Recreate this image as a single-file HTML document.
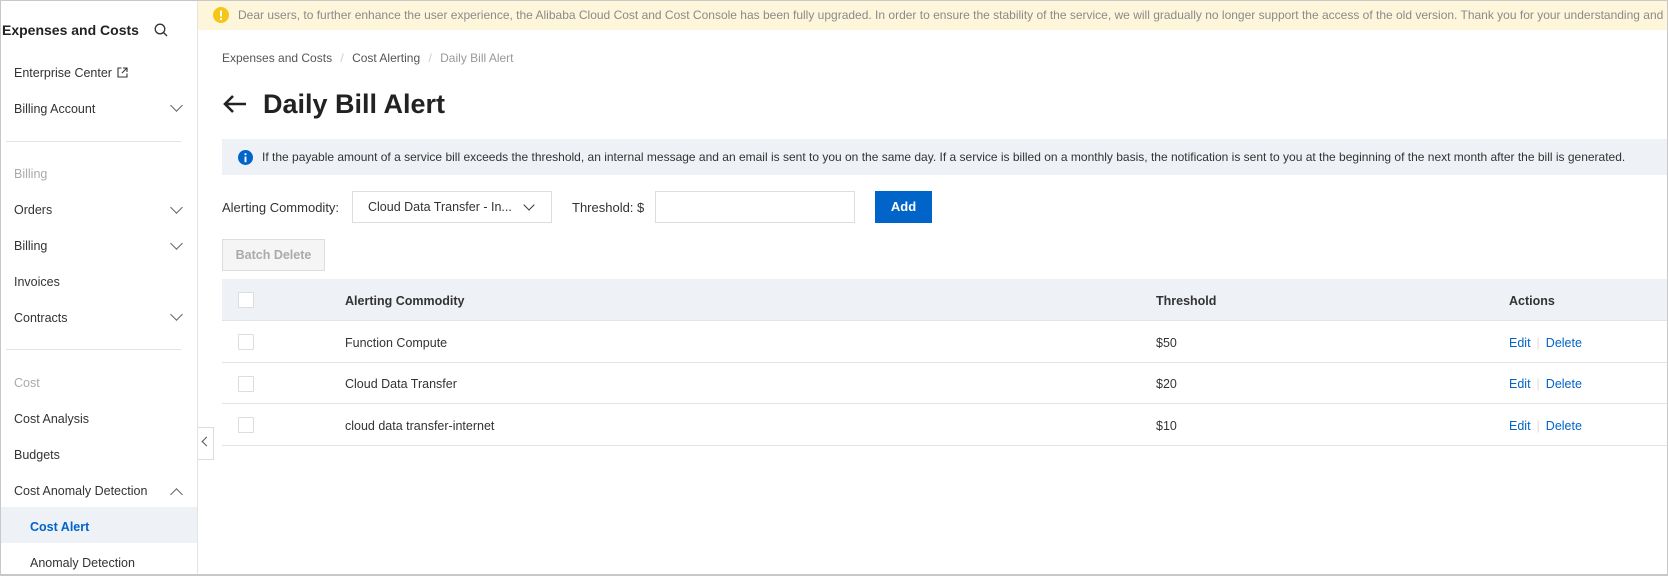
<!DOCTYPE html>
<html><head><meta charset="utf-8"><style>
*{box-sizing:border-box;margin:0;padding:0}
body{width:1668px;height:576px;overflow:hidden;background:#fff;font-family:"Liberation Sans",sans-serif;font-size:13px;color:#333;position:relative}
.frame{position:absolute;inset:0;border:1px solid #c8c8c8;border-bottom:2px solid #c8c8c8;pointer-events:none;z-index:9}
.side{position:absolute;left:0;top:0;width:198px;height:576px;border-right:1px solid #e3e3e3;background:#fff}
.a{position:absolute;white-space:nowrap}
.side .it{position:absolute;left:14px;font-size:13px;color:#333}
.chev{position:absolute;left:172px;width:9px;height:9px;border-right:1.3px solid #666;border-bottom:1.3px solid #666;transform:rotate(45deg)}
.sep{position:absolute;left:6px;width:175px;height:1px;background:#e3e3e3}
.banner{position:absolute;left:198px;top:0;right:0;height:30px;background:#fef6da;color:#8a8a8a;font-size:12px;line-height:30px;padding-left:40px;white-space:nowrap;overflow:hidden}
.cb{position:absolute;left:238px;width:16px;height:16px;border:1px solid #ddd;background:#fff;border-radius:1px}
.hl{position:absolute;left:222px;right:0;height:1px;background:#e3e3e3}
.lnk{color:#0064c8}
.t{font-size:12.5px}
</style></head><body>
<div class="side">
 <div class="a" style="left:2px;top:22px;font-size:14px;font-weight:bold;color:#222">Expenses and Costs</div>
 <svg class="a" style="left:154px;top:23px" width="14" height="14" viewBox="0 0 14 14"><circle cx="6" cy="6" r="4.8" fill="none" stroke="#333" stroke-width="1.3"/><path d="M9.5 9.5L13 13" stroke="#333" stroke-width="1.3"/></svg>
 <div class="it" style="top:66px;font-size:12.5px">Enterprise Center <svg style="vertical-align:-1px;margin-left:2px" width="11" height="11" viewBox="0 0 11 11"><path d="M4.5 1H1v9h9V6.5" fill="none" stroke="#333" stroke-width="1.1"/><path d="M6 1h4v4M10 1L5 6" fill="none" stroke="#333" stroke-width="1.1"/></svg></div>
 <div class="it" style="top:102px;font-size:12.5px">Billing Account</div><div class="chev" style="top:101px"></div>
 <div class="sep" style="top:141px"></div>
 <div class="it" style="top:167px;color:#aaa;font-size:12.5px">Billing</div>
 <div class="it" style="top:203px;font-size:12.5px">Orders</div><div class="chev" style="top:203px"></div>
 <div class="it" style="top:239px;font-size:12.5px">Billing</div><div class="chev" style="top:239px"></div>
 <div class="it" style="top:275px;font-size:12.5px">Invoices</div>
 <div class="it" style="top:311px;font-size:12.5px">Contracts</div><div class="chev" style="top:310px"></div>
 <div class="sep" style="top:349px"></div>
 <div class="it" style="top:376px;color:#aaa;font-size:12.5px">Cost</div>
 <div class="it" style="top:412px;font-size:12.5px">Cost Analysis</div>
 <div class="it" style="top:448px;font-size:12.5px">Budgets</div>
 <div class="it" style="top:484px;font-size:12.5px">Cost Anomaly Detection</div>
 <div class="chev" style="top:490px;transform:rotate(-135deg)"></div>
 <div class="a" style="left:1px;top:507px;width:196px;height:36px;background:#eef1f6"></div>
 <div class="it" style="left:30px;top:520px;color:#0064c8;font-weight:bold;font-size:12.5px">Cost Alert</div>
 <div class="it" style="left:30px;top:556px;font-size:12.5px">Anomaly Detection</div>
</div>
<div class="a" style="left:198px;top:427px;width:16px;height:33px;border:1px solid #ddd;border-left:none;background:#fff"></div>
<div class="a" style="left:203px;top:438px;width:7px;height:7px;border-left:1.3px solid #555;border-bottom:1.3px solid #555;transform:rotate(45deg)"></div>

<div class="banner">Dear users, to further enhance the user experience, the Alibaba Cloud Cost and Cost Console has been fully upgraded. In order to ensure the stability of the service, we will gradually no longer support the access of the old version. Thank you for your understanding and cooperation.</div>
<svg class="a" style="left:213px;top:7px" width="16" height="16" viewBox="0 0 16 16"><circle cx="8" cy="8" r="8" fill="#f5c518"/><rect x="7" y="3.5" width="2" height="6" fill="#fff"/><rect x="7" y="11" width="2" height="2" fill="#fff"/></svg>

<div class="a" style="left:222px;top:51px;font-size:12px;color:#555">Expenses and Costs <span style="color:#ccc;margin:0 5px">/</span> Cost Alerting <span style="color:#ccc;margin:0 5px">/</span> <span style="color:#999">Daily Bill Alert</span></div>
<svg class="a" style="left:222px;top:94px" width="26" height="20" viewBox="0 0 26 20"><path d="M24 10H3M11 2L3 10l8 8" fill="none" stroke="#222" stroke-width="2.6"/></svg>
<div class="a" style="left:263px;top:89px;font-size:27px;font-weight:bold;color:#222">Daily Bill Alert</div>

<div class="a" style="left:222px;top:139px;right:0;height:36px;background:#eef1f6"></div>
<svg class="a" style="left:238px;top:150px" width="15" height="15" viewBox="0 0 16 16"><circle cx="8" cy="8" r="8" fill="#0064c8"/><rect x="7" y="7" width="2" height="6" fill="#fff"/><rect x="7" y="3.5" width="2" height="2" fill="#fff"/></svg>
<div class="a" style="left:262px;top:150px;font-size:12px;color:#333">If the payable amount of a service bill exceeds the threshold, an internal message and an email is sent to you on the same day. If a service is billed on a monthly basis, the notification is sent to you at the beginning of the next month after the bill is generated.</div>

<div class="a" style="left:222px;top:200px">Alerting Commodity:</div>
<div class="a" style="left:352px;top:191px;width:200px;height:32px;border:1px solid #ddd"></div>
<div class="a t" style="left:368px;top:200px">Cloud Data Transfer - In...</div>
<div class="a" style="left:525px;top:201px;width:8px;height:8px;border-right:1.4px solid #333;border-bottom:1.4px solid #333;transform:rotate(45deg)"></div>
<div class="a" style="left:572px;top:200px">Threshold: $</div>
<div class="a" style="left:655px;top:191px;width:200px;height:32px;border:1px solid #ddd"></div>
<div class="a" style="left:875px;top:191px;width:57px;height:32px;background:#0064c8;color:#fff;font-weight:bold;text-align:center;line-height:32px">Add</div>

<div class="a" style="left:222px;top:239px;width:103px;height:32px;border:1px solid #ddd;background:#f5f5f5;color:#aaa;font-weight:bold;text-align:center;line-height:30px;font-size:12.5px">Batch Delete</div>

<div class="a" style="left:222px;top:279px;right:0;height:41px;background:#eef1f6"></div>
<div class="cb" style="top:292px"></div>
<div class="a t" style="left:345px;top:294px;font-weight:bold;color:#333">Alerting Commodity</div>
<div class="a t" style="left:1156px;top:294px;font-weight:bold;color:#333">Threshold</div>
<div class="a t" style="left:1509px;top:294px;font-weight:bold;color:#333">Actions</div>
<div class="hl" style="top:320px"></div>

<div class="cb" style="top:334px"></div>
<div class="a t" style="left:345px;top:336px">Function Compute</div>
<div class="a t" style="left:1156px;top:336px">$50</div>
<div class="a t" style="left:1509px;top:336px"><span class="lnk">Edit</span><span style="color:#ddd;margin:0 6px">|</span><span class="lnk">Delete</span></div>
<div class="hl" style="top:362px"></div>

<div class="cb" style="top:376px"></div>
<div class="a t" style="left:345px;top:377px">Cloud Data Transfer</div>
<div class="a t" style="left:1156px;top:377px">$20</div>
<div class="a t" style="left:1509px;top:377px"><span class="lnk">Edit</span><span style="color:#ddd;margin:0 6px">|</span><span class="lnk">Delete</span></div>
<div class="hl" style="top:403px"></div>

<div class="cb" style="top:417px"></div>
<div class="a t" style="left:345px;top:419px">cloud data transfer-internet</div>
<div class="a t" style="left:1156px;top:419px">$10</div>
<div class="a t" style="left:1509px;top:419px"><span class="lnk">Edit</span><span style="color:#ddd;margin:0 6px">|</span><span class="lnk">Delete</span></div>
<div class="hl" style="top:445px"></div>
<div class="frame"></div>
</body></html>
